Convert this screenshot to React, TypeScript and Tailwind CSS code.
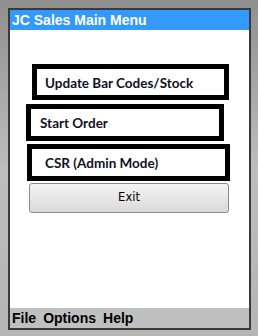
const menuItems = [
  { label: "Update Bar Codes/Stock", box: "ml-[22px] mt-[34px] w-[197px] h-[36px] pl-[8px]" },
  { label: "Start Order", box: "ml-[16px] mt-[4px] w-[198px] h-[37px] pl-[9px]" },
  { label: "CSR (Admin Mode)", box: "ml-[17px] mt-[3px] w-[203px] h-[37px] pl-[13px]" },
];

export default function App() {
  return (
    <div className="w-[258px] h-[336px] bg-gradient-to-b from-[#8f8f8f] via-[#bdbdbd] to-[#b5b5b5] pl-[8px] pr-[7px] pt-[8px] pb-[6px]">
      <div className="flex h-full flex-col border-2 border-[#3a3a3a] bg-white">
        {/* title bar */}
        <div className="flex h-[20px] items-center bg-[#3399ff] pl-[2px] font-['Liberation_Sans',sans-serif] text-[14px] font-bold text-white">
          JC Sales Main Menu
        </div>

        <div className="flex flex-1 flex-col">
          {menuItems.map((item) => (
            <div
              key={item.label}
              className={`flex items-center pt-[2px] border-[5px] border-black bg-white font-['Lato',sans-serif] text-[13.5px] font-bold text-[#111122] ${item.box}`}
            >
              {item.label}
            </div>
          ))}
          <button className="ml-[19px] mt-[2px] h-[30px] w-[200px] rounded-[3px] border border-[#8a8a8a] bg-gradient-to-b from-[#f4f4f4] to-[#d9d9d9] font-['DejaVu_Sans',sans-serif] text-[11.5px] text-black">
            Exit
          </button>
        </div>

        {/* menu bar */}
        <div className="flex h-[20px] items-center gap-[7px] bg-[#c0c0c0] pl-[2px] font-['Liberation_Sans',sans-serif] text-[14px] font-bold text-black">
          <span>File</span>
          <span>Options</span>
          <span>Help</span>
        </div>
      </div>
    </div>
  );
}
